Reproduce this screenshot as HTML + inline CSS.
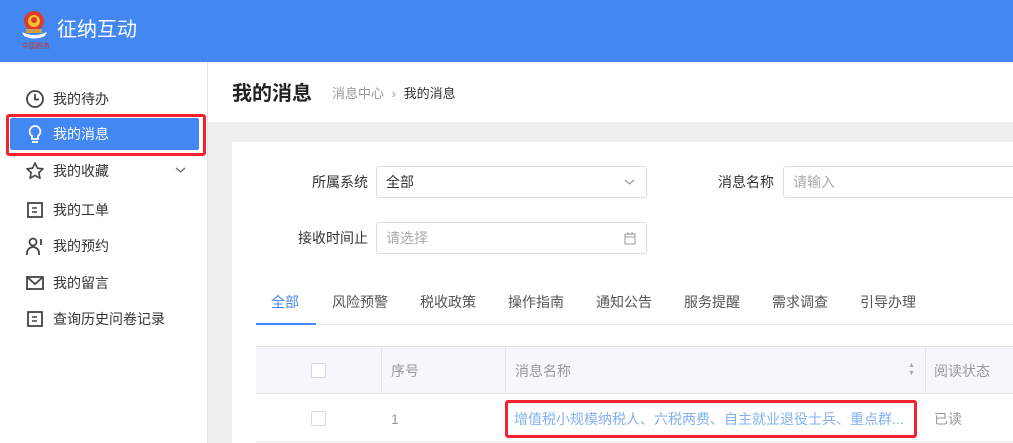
<!DOCTYPE html>
<html><head><meta charset="utf-8"><style>
*{margin:0;padding:0;box-sizing:border-box}
body{width:1013px;height:443px;overflow:hidden;background:#fff;font-family:"Liberation Sans","Noto Sans CJK SC",sans-serif;position:relative;color:#333}
.a{position:absolute}
.hd{left:0;top:0;width:1013px;height:62px;background:#4387f2}
.side{left:0;top:62px;width:208px;height:381px;background:#fff;border-right:1px solid #e3e3e3}
.it{position:absolute;left:53px;font-size:14px;color:#333;line-height:20px}
.ic{position:absolute;left:25px;width:20px;height:20px}
.gray{left:208px;top:122px;width:805px;height:321px;background:#eeeeee}
.card{left:232px;top:142px;width:781px;height:301px;background:#fff}
.lbl{font-size:14px;color:#333;line-height:20px}
.inp{border:1px solid #dcdfe6;border-radius:3px;height:32px;background:#fff;font-size:14px;line-height:30px;padding-left:9px}
.tab{font-size:14px;color:#555;top:292px;line-height:20px}
.th{font-size:14px;color:#999;line-height:20px}
.cb{width:15px;height:15px;border:1px solid #d9d9d9;border-radius:2px;background:#fff}
</style></head><body>
<div class="a hd"></div>
<svg class="a" style="left:20px;top:8px" width="30" height="42" viewBox="0 0 30 42">
<circle cx="14" cy="13" r="10" fill="#e03a2c"/><circle cx="14" cy="13" r="6" fill="#f2c230"/><circle cx="14" cy="12" r="3" fill="#e03a2c"/>
<path d="M2 24 Q14 30 27 24 L25 28 Q14 33 4 28Z" fill="#fff"/><rect x="6" y="21" width="16" height="4" fill="#c9a14a"/>
<text x="2" y="40" font-size="7" fill="#c0392b" font-family="Noto Sans CJK SC">中国税务</text></svg>
<div class="a" style="left:57px;top:16px;color:#fff;font-size:20px;line-height:28px">征纳互动</div>
<div class="a side"></div>
<svg class="ic" style="top:89px" viewBox="0 0 20 20"><circle cx="10" cy="10" r="8" fill="none" stroke="#444" stroke-width="1.8"/><path d="M10 5v5.5h4" fill="none" stroke="#444" stroke-width="1.8"/></svg>
<div class="it" style="top:89px">我的待办</div>
<div class="a" style="left:10px;top:118px;width:189px;height:32px;background:#4387f2;border-radius:2px"></div>
<div class="a" style="left:6px;top:114px;width:200px;height:42px;border:3px solid #f5222d;border-radius:3px"></div>
<svg class="ic" style="top:124px" viewBox="0 0 20 20"><path d="M10 2a5.5 5.5 0 0 0-3 10v3h6v-3a5.5 5.5 0 0 0-3-10z" fill="none" stroke="#fff" stroke-width="1.8"/><path d="M7 18h6" stroke="#fff" stroke-width="1.8"/></svg>
<div class="it" style="top:124px;color:#fff">我的消息</div>
<svg class="ic" style="top:161px" viewBox="0 0 20 20"><path d="M10 2l2.4 5.2 5.6.6-4.2 3.8 1.2 5.6L10 14.4 5 17.2l1.2-5.6L2 7.8l5.6-.6z" fill="none" stroke="#444" stroke-width="1.6" stroke-linejoin="round"/></svg>
<div class="it" style="top:161px">我的收藏</div>
<svg class="a" style="left:175px;top:166px" width="11" height="8" viewBox="0 0 11 8"><path d="M1 2l4.5 4L10 2" fill="none" stroke="#666" stroke-width="1.2"/></svg>
<svg class="ic" style="top:200px" viewBox="0 0 20 20"><rect x="3" y="3" width="14" height="14" fill="none" stroke="#444" stroke-width="1.8"/><path d="M7 8h5M7 12h5" stroke="#444" stroke-width="1.6"/></svg>
<div class="it" style="top:200px">我的工单</div>
<svg class="ic" style="top:236px" viewBox="0 0 20 20"><circle cx="8" cy="6" r="3.5" fill="none" stroke="#444" stroke-width="1.8"/><path d="M2 19v-2a6 6 0 0 1 12 0v2" fill="none" stroke="#444" stroke-width="1.8"/><path d="M16 3v6" stroke="#444" stroke-width="1.8"/></svg>
<div class="it" style="top:236px">我的预约</div>
<svg class="ic" style="top:273px" viewBox="0 0 20 20"><rect x="2" y="4" width="16" height="12" fill="none" stroke="#444" stroke-width="1.8"/><path d="M2 4l8 7 8-7" fill="none" stroke="#444" stroke-width="1.8"/></svg>
<div class="it" style="top:273px">我的留言</div>
<svg class="ic" style="top:309px" viewBox="0 0 20 20"><rect x="3" y="3" width="14" height="14" fill="none" stroke="#444" stroke-width="1.8"/><path d="M7 8h5M7 12h5" stroke="#444" stroke-width="1.6"/></svg>
<div class="it" style="top:309px">查询历史问卷记录</div>

<div class="a" style="left:232px;top:80px;font-size:20px;font-weight:bold;color:#222;line-height:28px">我的消息</div>
<div class="a" style="left:332px;top:84px;font-size:13px;color:#999;line-height:20px">消息中心 <span style="margin:0 4px">›</span> <span style="color:#333">我的消息</span></div>
<div class="a gray"></div>
<div class="a card"></div>
<div class="a lbl" style="left:312px;top:172px">所属系统</div>
<div class="a inp" style="left:376px;top:166px;width:271px">全部<svg style="position:absolute;right:11px;top:11px" width="11" height="8" viewBox="0 0 11 8"><path d="M1 2l4.5 4L10 2" fill="none" stroke="#999" stroke-width="1.2"/></svg></div>
<div class="a lbl" style="left:718px;top:172px">消息名称</div>
<div class="a inp" style="left:783px;top:166px;width:240px;color:#aaa">请输入</div>
<div class="a lbl" style="left:298px;top:228px">接收时间止</div>
<div class="a inp" style="left:376px;top:222px;width:271px;color:#aaa">请选择<svg style="position:absolute;right:10px;top:9px" width="12" height="13" viewBox="0 0 12 13"><rect x="1" y="2" width="10" height="10" fill="none" stroke="#999"/><path d="M1 5h10M4 0v3M8 0v3" stroke="#999"/></svg></div>
<div class="a tab" style="left:271px;color:#4387f2">全部</div>
<div class="a tab" style="left:332px">风险预警</div>
<div class="a tab" style="left:420px">税收政策</div>
<div class="a tab" style="left:508px">操作指南</div>
<div class="a tab" style="left:596px">通知公告</div>
<div class="a tab" style="left:684px">服务提醒</div>
<div class="a tab" style="left:772px">需求调查</div>
<div class="a tab" style="left:860px">引导办理</div>
<div class="a" style="left:256px;top:324px;width:757px;height:1px;background:#e8e8e8"></div>
<div class="a" style="left:256px;top:323px;width:60px;height:2px;background:#4387f2"></div>
<div class="a" style="left:256px;top:346px;width:757px;height:48px;background:#f5f7fa;border-top:1px solid #e4e4e4;border-bottom:1px solid #e4e4e4"></div>
<div class="a" style="left:381px;top:346px;width:1px;height:48px;background:#e4e4e4"></div>
<div class="a" style="left:505px;top:346px;width:1px;height:48px;background:#e4e4e4"></div>
<div class="a" style="left:925px;top:346px;width:1px;height:48px;background:#e4e4e4"></div>
<div class="a cb" style="left:311px;top:363px"></div>
<div class="a th" style="left:391px;top:361px">序号</div>
<div class="a th" style="left:515px;top:361px">消息名称</div>
<div class="a" style="left:908px;top:362px;font-size:7px;color:#aaa;line-height:8px">▲<br>▼</div>
<div class="a th" style="left:934px;top:361px">阅读状态</div>
<div class="a" style="left:256px;top:441px;width:757px;height:1px;background:#e4e4e4"></div>
<div class="a cb" style="left:311px;top:411px"></div>
<div class="a th" style="left:391px;top:409px">1</div>
<div class="a th" style="left:514px;top:409px;color:#86b0f2;white-space:nowrap">增值税小规模纳税人、六税两费、自主就业退役士兵、重点群...</div>
<div class="a th" style="left:934px;top:409px">已读</div>
<div class="a" style="left:505px;top:400px;width:412px;height:38px;border:3px solid #f5222d;border-radius:3px"></div>
</body></html>
